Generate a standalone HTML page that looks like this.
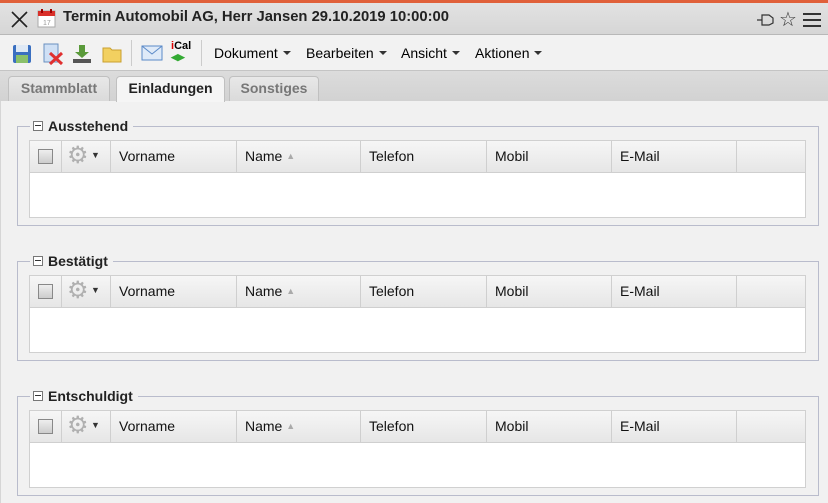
<!DOCTYPE html><html><head><style>
*{box-sizing:border-box;margin:0;padding:0}
body{width:828px;height:503px;overflow:hidden;background:#f1f1f1;font-family:"Liberation Sans",Tahoma,sans-serif;font-size:14px;color:#000;position:relative}
.abs{position:absolute}
.title{left:0;top:0;width:828px;height:35px;border-top:3px solid #e0603a;background:linear-gradient(#e2e2e2,#d6d6d6);border-bottom:1px solid #b8b8b8}
.tb{left:0;top:35px;width:828px;height:36px;background:#f2f2f2;border-bottom:1px solid #c4c4c4}
.tabs{left:0;top:71px;width:828px;height:30px;background:linear-gradient(#dcdcdc,#d2d2d2)}
.tab{position:absolute;top:5px;height:25px;border:1px solid #c0c0c0;border-bottom:none;border-radius:4px 4px 0 0;background:linear-gradient(#e8e8e8,#dadada);font-weight:bold;color:#777;text-align:center;line-height:23px;font-size:14px}
.tab.act{background:#f5f5f5;color:#222;height:26px}
.fs{position:absolute;left:17px;width:802px;border:1px solid #b9bccc}
.leg{position:absolute;left:12px;top:-10px;background:#f1f1f1;padding:0 5px 0 3px;font-weight:bold;font-size:14px;color:#222;line-height:18px}
.leg i{display:inline-block;width:10px;height:10px;border:1px solid #777;background:#fff;position:relative;margin-right:5px;vertical-align:0}
.leg i:after{content:"";position:absolute;left:1px;top:3px;width:6px;height:1px;background:#333}
.grid{position:absolute;left:11px;width:777px;border:1px solid #d0d0d0;background:#fff}
.hd{height:32px;background:linear-gradient(#f6f6f6,#e6e6e6);border-bottom:1px solid #cfcfcf;position:relative}
.c{position:absolute;top:0;height:31px;border-right:1px solid #cfcfcf;line-height:31px;padding-left:8px;font-size:14px;color:#111}
.menu{position:absolute;top:10px;font-size:14px}
.menu:after{content:"";display:inline-block;border:4px solid transparent;border-top:4px solid #333;border-bottom:none;margin-left:5px;vertical-align:3px}
.g{color:#b0b0b0;font-size:24px;padding-left:5px;line-height:29px}
</style></head><body>
<div class="abs title">
<svg class="abs" style="left:11px;top:8px" width="17" height="17"><path d="M1 1L16 16M16 1L1 16" stroke="#222" stroke-width="1.6"/></svg>
<svg class="abs" style="left:37px;top:5px" width="19" height="20"><rect x="1" y="3" width="17" height="16" fill="#fff" stroke="#aaa"/><rect x="1" y="3" width="17" height="5" fill="#d9302a"/><rect x="4" y="1" width="2" height="4" fill="#900"/><rect x="13" y="1" width="2" height="4" fill="#900"/><text x="6" y="17" font-size="7" fill="#999" font-family="Liberation Sans">17</text></svg>
<div class="abs" style="left:63px;top:6px;font-weight:bold;font-size:14.8px;color:#222">Termin Automobil AG, Herr Jansen 29.10.2019 10:00:00</div>
<svg class="abs" style="left:756px;top:8px" width="20" height="18"><path d="M1 9H6M6 4H13L17 7V12L13 14H6Z" fill="none" stroke="#333" stroke-width="1.2"/></svg>
<div class="abs" style="left:779px;top:4px;font-size:20px;color:#333">☆</div>
<svg class="abs" style="left:803px;top:9px" width="18" height="16"><path d="M0 2H18M0 8H18M0 14H18" stroke="#333" stroke-width="2"/></svg>
</div>
<div class="abs tb">
<svg class="abs" style="left:12px;top:9px" width="20" height="20"><rect x="1" y="1" width="18" height="18" rx="2" fill="#3a6fc0"/><rect x="4" y="1" width="12" height="7" fill="#dfe9f5"/><rect x="4" y="11" width="12" height="8" fill="#8ac06a"/></svg>
<svg class="abs" style="left:42px;top:8px" width="22" height="22"><rect x="2" y="1" width="14" height="18" fill="#cfe0f5" stroke="#6a90c0"/><path d="M8 10L20 21M20 10L8 21" stroke="#e03030" stroke-width="3"/></svg>
<svg class="abs" style="left:72px;top:9px" width="20" height="20"><path d="M7 1H13V8H17L10 14L3 8H7Z" fill="#5a9a3a"/><rect x="1" y="15" width="18" height="4" fill="#555"/></svg>
<svg class="abs" style="left:102px;top:10px" width="20" height="18"><path d="M1 3H8L10 5H19V17H1Z" fill="#f2d060" stroke="#c9a030"/></svg>
<div class="abs" style="left:131px;top:5px;width:1px;height:26px;background:#ccc"></div>
<svg class="abs" style="left:141px;top:10px" width="22" height="16"><rect x="1" y="1" width="20" height="14" fill="#dfeaf8" stroke="#5b8ac8"/><path d="M1 1L11 9L21 1" fill="none" stroke="#5b8ac8"/></svg>
<div class="abs" style="left:171px;top:6px;font-size:11px;font-weight:bold;line-height:11px"><span style="color:#d00">i</span>Cal<br><span style="color:#3a3;font-size:9px">◀▶</span></div>
<div class="abs" style="left:201px;top:5px;width:1px;height:26px;background:#ccc"></div>
<div class="menu" style="left:214px">Dokument</div>
<div class="menu" style="left:306px">Bearbeiten</div>
<div class="menu" style="left:401px">Ansicht</div>
<div class="menu" style="left:475px">Aktionen</div>
</div>
<div class="abs tabs">
<div class="tab" style="left:8px;width:102px">Stammblatt</div>
<div class="tab act" style="left:116px;width:109px">Einladungen</div>
<div class="tab" style="left:229px;width:90px">Sonstiges</div>
</div>
<div class="abs" style="left:0;top:101px;width:828px;height:402px;border-left:1px solid #d6d6d6"></div>

<div class="fs" style="top:126px;height:100px"><div class="leg"><i></i>Ausstehend</div>
<div class="grid" style="top:13px;height:78px"><div class="hd">
<div class="c" style="left:0;width:32px"><span style="position:absolute;left:8px;top:8px;width:15px;height:15px;border:1px solid #888;background:linear-gradient(#eee,#ccc)"></span></div>
<div class="c g" style="left:32px;width:49px">⚙<span style="color:#333;font-size:9px;vertical-align:5px"> ▼</span></div>
<div class="c" style="left:81px;width:126px">Vorname</div>
<div class="c" style="left:207px;width:124px">Name <span style="color:#aaa;font-size:9px;vertical-align:2px">▲</span></div>
<div class="c" style="left:331px;width:126px">Telefon</div>
<div class="c" style="left:457px;width:125px">Mobil</div>
<div class="c" style="left:582px;width:125px">E-Mail</div>
</div></div></div>

<div class="fs" style="top:261px;height:100px"><div class="leg"><i></i>Bestätigt</div>
<div class="grid" style="top:13px;height:78px"><div class="hd">
<div class="c" style="left:0;width:32px"><span style="position:absolute;left:8px;top:8px;width:15px;height:15px;border:1px solid #888;background:linear-gradient(#eee,#ccc)"></span></div>
<div class="c g" style="left:32px;width:49px">⚙<span style="color:#333;font-size:9px;vertical-align:5px"> ▼</span></div>
<div class="c" style="left:81px;width:126px">Vorname</div>
<div class="c" style="left:207px;width:124px">Name <span style="color:#aaa;font-size:9px;vertical-align:2px">▲</span></div>
<div class="c" style="left:331px;width:126px">Telefon</div>
<div class="c" style="left:457px;width:125px">Mobil</div>
<div class="c" style="left:582px;width:125px">E-Mail</div>
</div></div></div>

<div class="fs" style="top:396px;height:100px"><div class="leg"><i></i>Entschuldigt</div>
<div class="grid" style="top:13px;height:78px"><div class="hd">
<div class="c" style="left:0;width:32px"><span style="position:absolute;left:8px;top:8px;width:15px;height:15px;border:1px solid #888;background:linear-gradient(#eee,#ccc)"></span></div>
<div class="c g" style="left:32px;width:49px">⚙<span style="color:#333;font-size:9px;vertical-align:5px"> ▼</span></div>
<div class="c" style="left:81px;width:126px">Vorname</div>
<div class="c" style="left:207px;width:124px">Name <span style="color:#aaa;font-size:9px;vertical-align:2px">▲</span></div>
<div class="c" style="left:331px;width:126px">Telefon</div>
<div class="c" style="left:457px;width:125px">Mobil</div>
<div class="c" style="left:582px;width:125px">E-Mail</div>
</div></div></div>
</body></html>
